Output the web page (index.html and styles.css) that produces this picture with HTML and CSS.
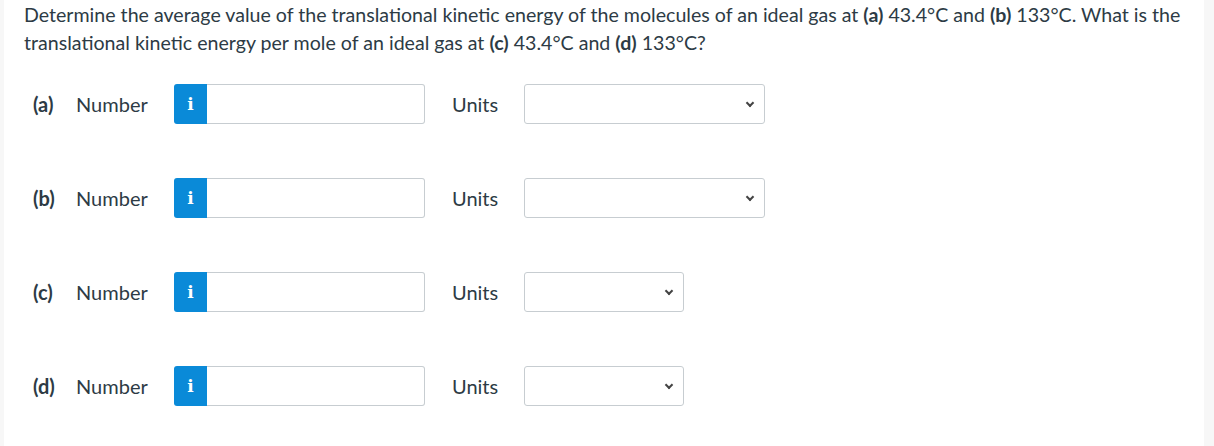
FILE: index.html
```html
<!DOCTYPE html>
<html>
<head>
    <meta charset="utf-8">
    <title>Question</title>
    <link rel="stylesheet" href="styles.css">
</head>
<body>
    <div class="question">
        <p class="prompt">
            Determine the average value of the translational kinetic energy of the molecules of an ideal gas at <b>(a)</b> 43.4°C and <b>(b)</b> 133°C. What is the translational kinetic energy per mole of an ideal gas at <b>(c)</b> 43.4°C and <b>(d)</b> 133°C?
        </p>

        <div class="answer-row">
            <span class="part">(a)</span>
            <span class="label">Number</span>
            <div class="number-field">
                <span class="info-btn">i</span>
                <input type="text" class="number-input">
            </div>
            <span class="units-label">Units</span>
            <div class="select-box"><span class="chevron"></span></div>
        </div>

        <div class="answer-row">
            <span class="part">(b)</span>
            <span class="label">Number</span>
            <div class="number-field">
                <span class="info-btn">i</span>
                <input type="text" class="number-input">
            </div>
            <span class="units-label">Units</span>
            <div class="select-box"><span class="chevron"></span></div>
        </div>

        <div class="answer-row">
            <span class="part">(c)</span>
            <span class="label">Number</span>
            <div class="number-field">
                <span class="info-btn">i</span>
                <input type="text" class="number-input">
            </div>
            <span class="units-label">Units</span>
            <div class="select-box narrow"><span class="chevron"></span></div>
        </div>

        <div class="answer-row">
            <span class="part">(d)</span>
            <span class="label">Number</span>
            <div class="number-field">
                <span class="info-btn">i</span>
                <input type="text" class="number-input">
            </div>
            <span class="units-label">Units</span>
            <div class="select-box narrow"><span class="chevron"></span></div>
        </div>
    </div>
</body>
</html>
```

FILE: styles.css
```css
:root {
    --text-color: #2d3b45;
    --border-color: #c7cdd1;
    --info-blue: #0a8ad8;
}

* {
    box-sizing: border-box;
}

body {
    margin: 0;
    background: #f7f7f7;
    font-family: Lato, 'Liberation Sans', sans-serif;
    color: var(--text-color);
}

.question {
    margin-left: 4px;
    width: 1200px;
    height: 446px;
    background: #ffffff;
    padding: 1px 20px 0 20px;
}

.prompt {
    margin: 0 0 27px 0;
    font-size: 19.6px;
    line-height: 28px;
}

.answer-row {
    display: flex;
    align-items: center;
    height: 40px;
    margin-bottom: 54px;
    font-size: 20px;
}

.answer-row:last-child {
    margin-bottom: 0;
}

.part {
    font-weight: 700;
    margin-left: 9px;
    width: 43px;
}

.label {
    width: 98px;
}

.number-field {
    display: flex;
    height: 40px;
}

.info-btn {
    width: 33px;
    height: 40px;
    background: var(--info-blue);
    color: #fff;
    border-radius: 3px 0 0 3px;
    display: flex;
    align-items: center;
    justify-content: center;
    font-family: 'DejaVu Serif', serif;
    font-weight: 700;
    font-size: 17px;
}

.number-input {
    width: 218px;
    height: 40px;
    border: 1px solid var(--border-color);
    border-left: none;
    border-radius: 0 3px 3px 0;
    margin: 0;
    padding: 0 8px;
}

.units-label {
    margin-left: 27px;
    width: 72px;
}

.select-box {
    position: relative;
    width: 241px;
    height: 40px;
    border: 1px solid var(--border-color);
    border-radius: 3px;
}

.select-box.narrow {
    width: 160px;
}

.chevron {
    position: absolute;
    right: 11px;
    top: 15px;
    width: 6px;
    height: 6px;
    border-right: 2px solid #444;
    border-bottom: 2px solid #444;
    transform: rotate(45deg);
}
```
